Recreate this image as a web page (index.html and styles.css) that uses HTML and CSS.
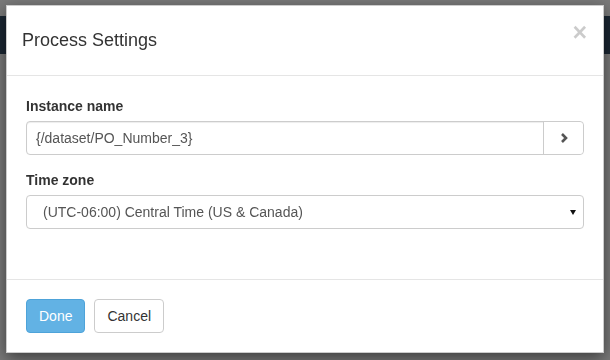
FILE: index.html
```html
<!DOCTYPE html>
<html lang="en">
<head>
    <meta charset="UTF-8">
    <title>Process Settings</title>
    <link rel="stylesheet" href="styles.css">
</head>
<body>
    <div class="page">
        <div class="navbar"></div>
    </div>
    <div class="backdrop"></div>

    <div class="modal">
        <div class="modal-header">
            <h4 class="modal-title">Process Settings</h4>
            <button type="button" class="close">&times;</button>
        </div>
        <div class="modal-body">
            <div class="form-group">
                <label>Instance name</label>
                <div class="input-group">
                    <div class="form-control">{/dataset/PO_Number_3}</div>
                    <button type="button" class="addon-btn">
                        <svg width="8" height="10" viewBox="0 0 8 10">
                            <path d="M2 1 L6 5 L2 9" fill="none" stroke="#555" stroke-width="2.6"/>
                        </svg>
                    </button>
                </div>
            </div>
            <div class="form-group">
                <label>Time zone</label>
                <div class="select">
                    <span>(UTC-06:00) Central Time (US &amp; Canada)</span>
                    <svg width="6" height="5" viewBox="0 0 6 5">
                        <path d="M0 0 H6 L3 5 Z" fill="#111"/>
                    </svg>
                </div>
            </div>
        </div>
        <div class="modal-footer">
            <button type="button" class="btn btn-primary">Done</button>
            <button type="button" class="btn btn-default">Cancel</button>
        </div>
    </div>
</body>
</html>
```

FILE: styles.css
```css
* {
    box-sizing: border-box;
    margin: 0;
    padding: 0;
}

body {
    font-family: "Liberation Sans", Arial, sans-serif;
    font-size: 14px;
    color: #333;
    background-color: #f4f4f4;
    width: 610px;
    height: 360px;
    overflow: hidden;
}

.page {
    padding-top: 16px;
}

.navbar {
    height: 38px;
    background-color: #374f66;
}

.backdrop {
    position: fixed;
    top: 0;
    left: 0;
    right: 0;
    bottom: 0;
    background-color: rgba(0, 0, 0, 0.5);
}

.modal {
    position: absolute;
    top: 5px;
    left: 6px;
    width: 598px;
    background-color: #fff;
    border: 1px solid rgba(0, 0, 0, 0.2);
    box-shadow: 0 5px 15px rgba(0, 0, 0, 0.5);
}

.modal-header {
    display: flex;
    align-items: flex-start;
    padding: 21px 15px 22px 15px;
    border-bottom: 1px solid #e5e5e5;
}

.modal-title {
    flex: 1;
    font-size: 18px;
    font-weight: normal;
    line-height: 26px;
    color: #333;
}

.close {
    margin-top: -7px;
    margin-right: 1px;
    background: none;
    border: none;
    font-family: "Liberation Sans", Arial, sans-serif;
    font-size: 25px;
    font-weight: bold;
    line-height: 1;
    color: #000;
    opacity: 0.2;
}

.modal-body {
    padding: 20px 19px 50px 19px;
}

.form-group + .form-group {
    margin-top: 15px;
}

label {
    display: block;
    font-weight: bold;
    line-height: 20px;
    margin-bottom: 5px;
}

.input-group {
    display: flex;
    height: 34px;
    border: 1px solid #ccc;
    border-radius: 4px;
    box-shadow: inset 0 1px 1px rgba(0, 0, 0, 0.075);
}

.form-control {
    flex: 1;
    padding: 0 9px;
    line-height: 32px;
    color: #555;
}

.addon-btn {
    width: 40px;
    background: #fff;
    border: none;
    border-left: 1px solid #ccc;
    border-radius: 0 4px 4px 0;
    display: flex;
    align-items: center;
    justify-content: center;
}

.select {
    display: flex;
    align-items: center;
    justify-content: space-between;
    height: 34px;
    padding: 0 7px 0 16px;
    border: 1px solid #ccc;
    border-radius: 4px;
    color: #555;
}

.modal-footer {
    display: flex;
    gap: 9px;
    padding: 19px 19px 19px 19px;
    border-top: 1px solid #e5e5e5;
}

.btn {
    height: 34px;
    padding: 0 12px;
    font-family: "Liberation Sans", Arial, sans-serif;
    font-size: 14px;
    line-height: 32px;
    border: 1px solid transparent;
    border-radius: 4px;
}

.btn-primary {
    color: #fff;
    background-color: #62b2e4;
    border-color: #4ea3d9;
}

.btn-default {
    color: #333;
    background-color: #fff;
    border-color: #ccc;
}
```
